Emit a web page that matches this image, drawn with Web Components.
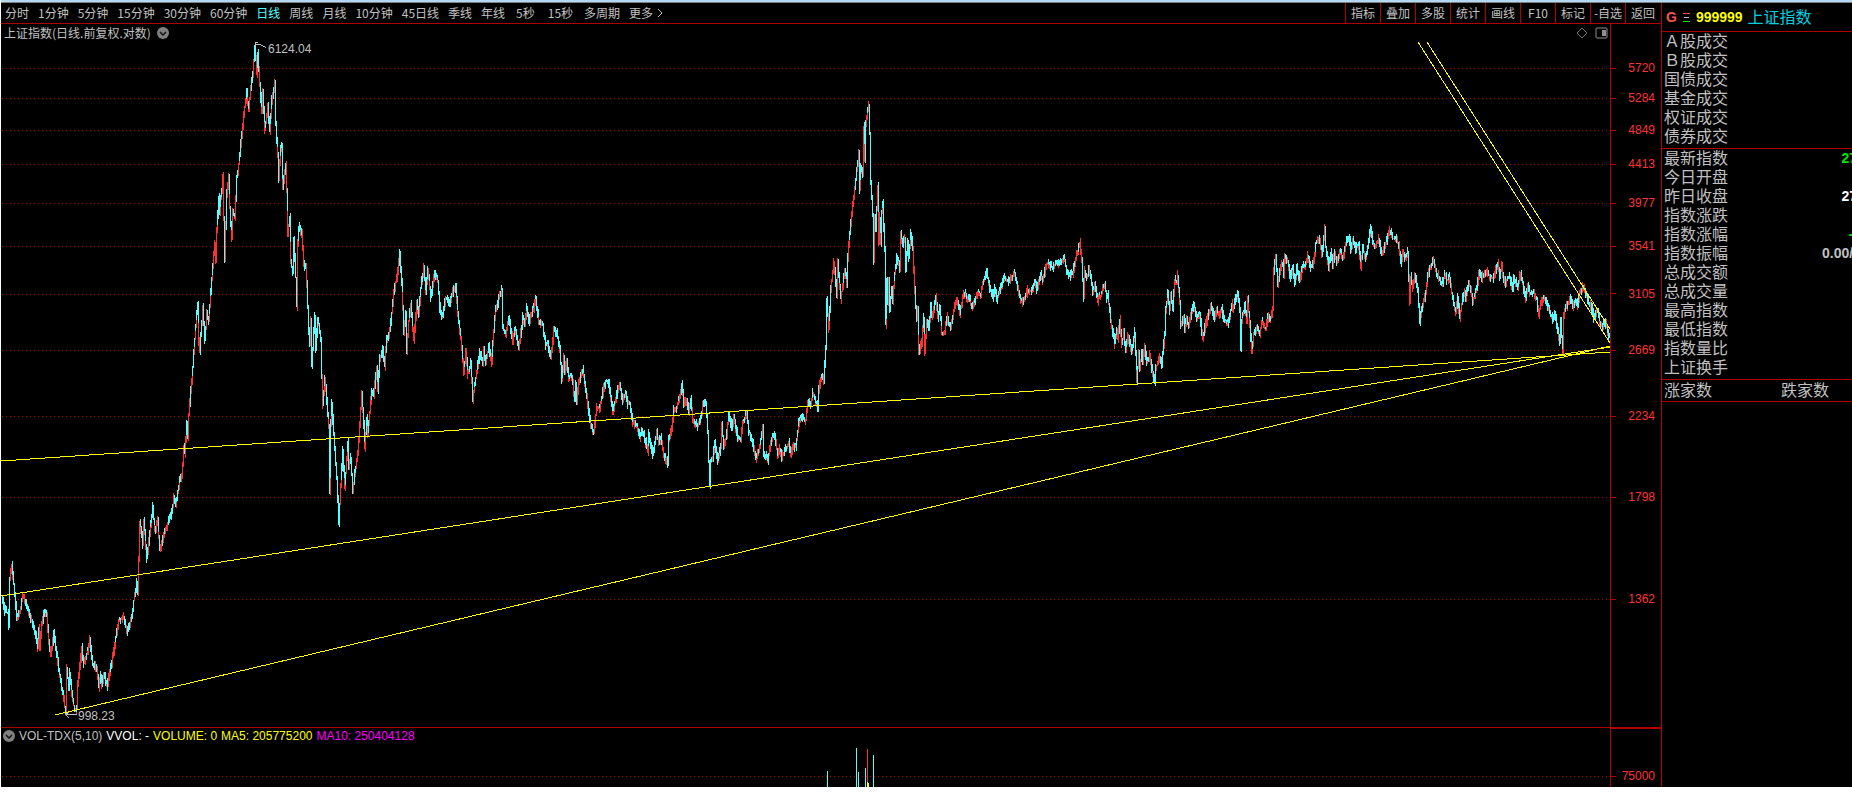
<!DOCTYPE html>
<html lang="zh-CN">
<head>
<meta charset="utf-8">
<meta name="viewport" content="width=device-width, initial-scale=1">
<title>上证指数</title>
<style>
    :root {
        --line: #b00000;
        --text: #c0c0c0;
        --up: #ff3232;
        --down: #54ffff;
        --draw: #ffff00;
    }

    body {
        margin: 0;
        background: #fff;
        color: var(--text);
        font-family: "Liberation Sans", "Noto Sans CJK SC", sans-serif;
        font-size: 12px;
    }
</style>
</head>
<body>
<stock-terminal>
    <period-bar slot="periods"></period-bar>
    <tool-bar slot="tools"></tool-bar>
    <price-chart slot="chart">上证指数(日线.前复权.对数)</price-chart>
    <volume-chart slot="volume"></volume-chart>
    <quote-panel slot="quote" code="999999" name="上证指数"></quote-panel>
</stock-terminal>

<script>
// Daily path of the index, x,y on a 1609 x 703 sheet that starts at 1,24
const TRACE = `
2,598 5,610 8,613 9,625 10,580 12,565 15,593 17,617 20,613 23,595 28,607 32,622 35,630 38,647 39,628 40,647 42,623
45,610 47,615 49,643 51,655 54,632 57,653 60,677 63,693 66,713 67,667 69,688 70,673 73,700 75,710 77,708 78,683 80,667
82,648 84,663 88,650 90,640 93,665 97,667 99,687 101,675 102,685 104,672 107,685 112,663 116,637 119,620 124,617
127,632 132,617 134,600 137,583 138,590 139,557 140,523 143,543 144,520 147,557 150,533 153,507 155,530 158,520
160,550 163,537 167,525 172,512 174,497 176,503 180,480 182,477 184,447 185,452 187,423 188,438 189,413 191,390
192,380 194,352 197,312 198,305 199,340 200,350 203,307 205,340 207,313 209,320 212,277 215,243 216,260 217,230
219,197 220,210 223,177 225,257 227,193 229,175 230,207 232,237 233,210 235,217 237,177 239,163 242,133 245,107
247,92 249,110 251,87 253,73 255,45 257,73 258,53 261,97 262,110 263,90 265,130 268,107 270,130 272,100 275,82
276,123 278,153 279,180 281,147 282,143 283,187 286,163 287,190 288,233 290,217 291,260 293,273 294,237 296,277
297,305 298,243 299,227 302,233 304,263 306,268 307,283 309,330 310,343 311,320 312,363 315,317 316,347 318,318
321,340 322,377 323,403 325,377 327,400 329,427 330,490 331,423 332,403 335,450 337,477 339,522 340,503 343,450
345,487 348,443 349,467 351,457 353,492 355,473 358,453 360,423 362,392 364,423 365,447 367,417 368,433 372,390
374,393 377,367 378,390 380,357 383,350 385,365 387,337 389,337 392,313 394,292 397,277 400,253 402,283 403,307
404,333 406,313 407,350 409,320 411,303 414,340 417,303 419,313 421,287 424,267 426,290 428,270 431,297 435,273
438,280 440,307 442,317 446,297 450,303 454,288 456,287 458,313 461,337 464,373 466,350 468,373 471,362 473,398
476,377 480,352 483,362 484,350 486,362 489,347 492,362 493,343 496,307 498,302 502,288 503,327 506,333 509,318
513,340 515,327 519,348 523,317 525,323 527,308 529,322 533,310 536,300 539,320 543,325 546,345 548,343 551,357
554,330 557,332 560,348 562,378 564,357 565,370 567,360 569,377 572,375 575,400 576,383 577,402 579,380 583,370
586,388 588,405 591,425 594,432 597,407 600,407 604,387 606,380 609,383 613,412 617,393 620,383 623,400 626,392
628,403 630,403 633,422 637,425 640,437 642,428 646,442 648,450 649,432 653,455 657,433 659,443 661,437 664,455
668,463 669,440 672,427 674,410 677,407 679,400 682,385 684,403 687,400 689,412 691,400 693,420 698,425 701,417
703,405 706,402 708,430 709,460 710,485 711,460 713,457 715,442 718,460 721,447 722,423 724,447 727,433 729,412
732,427 734,417 738,437 741,440 743,423 747,413 749,430 752,440 756,457 759,450 763,427 764,452 768,460 770,447
774,433 778,453 780,448 782,457 785,450 789,443 791,453 793,447 796,447 799,422 803,417 806,420 808,400 811,405
813,393 818,407 819,390 822,375 824,380 826,347 827,300 829,327 831,290 834,262 837,293 838,262 841,298 845,270
847,282 848,257 850,233 852,215 855,187 857,170 859,153 860,188 861,165 863,173 864,127 865,160 866,123 868,110
869,106 870,133 871,183 873,213 874,260 875,215 876,227 878,187 879,243 880,217 881,243 882,210 883,202 885,250
886,323 887,280 888,303 889,280 890,307 892,287 893,302 895,273 897,257 900,268 901,233 903,243 905,237 906,267
908,243 909,257 911,232 913,250 915,290 917,320 918,310 919,352 922,343 924,317 925,352 927,320 929,330 931,307
933,317 936,297 938,317 940,308 942,332 945,332 947,317 951,328 954,310 957,300 960,313 964,292 967,298 969,295
971,305 973,308 977,293 981,293 983,283 987,273 990,287 993,297 995,287 997,298 1001,287 1004,277 1008,280
1015,273 1018,288 1022,302 1024,300 1028,290 1032,290 1035,282 1037,288 1041,273 1043,280 1047,263 1053,267
1056,262 1060,263 1064,257 1067,270 1070,275 1073,273 1076,258 1080,243 1082,260 1084,297 1085,270 1087,278
1089,270 1091,275 1093,293 1095,283 1098,300 1101,295 1105,283 1107,298 1108,295 1111,320 1115,343 1117,328
1118,338 1120,320 1122,343 1124,333 1126,350 1128,335 1132,352 1135,332 1136,353 1137,380 1139,353 1140,370
1142,350 1143,360 1145,347 1147,363 1150,355 1153,373 1155,382 1156,367 1160,358 1162,363 1164,343 1165,333
1166,310 1168,293 1170,310 1171,295 1173,307 1175,280 1177,282 1178,275 1180,300 1181,325 1184,318 1185,327
1187,317 1189,327 1192,310 1194,303 1197,318 1200,313 1201,323 1203,338 1206,322 1208,318 1211,305 1215,318
1217,307 1219,315 1222,308 1224,320 1228,323 1230,317 1232,303 1233,310 1236,297 1238,293 1240,310 1241,347
1242,320 1245,305 1247,320 1248,300 1250,323 1252,352 1254,333 1257,327 1260,335 1262,320 1266,330 1268,315
1270,320 1273,310 1274,270 1276,257 1278,283 1280,270 1283,262 1284,273 1285,257 1288,260 1290,278 1293,268
1295,282 1297,267 1300,280 1303,265 1305,267 1308,255 1311,267 1314,262 1316,243 1318,238 1320,240 1322,253
1323,247 1325,227 1326,247 1329,267 1331,253 1333,263 1335,252 1337,262 1340,252 1343,258 1345,248 1347,238
1350,240 1351,248 1353,240 1356,248 1359,243 1361,267 1363,248 1366,258 1369,240 1371,228 1373,243 1375,247
1379,238 1382,253 1386,243 1390,230 1393,238 1396,238 1399,245 1401,262 1403,252 1405,258 1408,252 1409,277
1410,300 1411,277 1413,287 1415,275 1418,290 1420,320 1422,307 1425,298 1428,277 1430,268 1434,260 1437,273
1439,277 1442,285 1445,273 1447,280 1450,277 1452,293 1456,312 1458,298 1460,318 1462,303 1464,292 1466,297
1469,282 1471,290 1473,300 1477,287 1479,273 1482,278 1485,273 1488,270 1490,278 1493,278 1496,270 1498,263
1500,277 1502,262 1503,275 1506,283 1508,277 1510,277 1513,288 1514,278 1518,285 1521,272 1523,283 1526,298
1528,285 1530,292 1534,293 1537,298 1539,315 1541,302 1545,298 1548,305 1550,312 1553,320 1555,312 1557,325
1560,342 1561,318 1563,353 1564,313 1567,305 1571,298 1573,307 1576,300 1578,305 1580,292 1583,287 1586,293
1589,303 1592,307 1594,317 1598,308 1600,322 1602,325 1605,322 1607,325 1609,337`;

const LEVELS = [5720, 5284, 4849, 4413, 3977, 3541, 3105, 2669, 2234, 1798, 1362];
const TOP = 24;
const HEIGHT = 703;

// log scale of the price pane
const levelY = (price) => Math.round(68.4 + Math.log(5720 / price) * 370);
const percent = (y) => ((y - TOP) / HEIGHT * 100) + "%";

const foldIcon = `
    <svg class="fold" width="12" height="12" viewBox="0 0 12 12" aria-hidden="true">
        <circle cx="6" cy="6" r="6" fill="#808080"/>
        <path d="M3 5l3 3 3-3" fill="none" stroke="#111" stroke-width="1.5"/>
    </svg>`;

// Splits every pixel column into a falling part and a rising part
function buildBars() {
    const knots = TRACE.trim().split(/\s+/).map((pair) => pair.split(",").map(Number));
    const paths = { up: "", down: "" };
    let seed = 7;
    const random = () => {
        seed = (seed * 1103515245 + 12345) % 2147483648;
        return seed / 2147483648;
    };

    const at = (x) => {
        let i = 1;
        while (i < knots.length - 1 && knots[i][0] < x) i++;
        const [x0, y0] = knots[i - 1];
        const [x1, y1] = knots[i];
        return y0 + (y1 - y0) * Math.min(1, (x - x0) / (x1 - x0));
    };

    for (let x = 2; x < 1610; x++) {
        const a = at(x);
        const b = at(x + 1);
        const top = Math.round(Math.min(a, b) - random() * 5);
        const bottom = Math.round(Math.max(a, b) + 1 + random() * 5);
        const fall = b > a ? 0.62 : 0.34;
        const pick = random();
        const col = x + 0.5;

        if (pick < fall) {
            paths.down += `M${col} ${top}V${bottom}`;
        } else if (pick > fall + 0.22) {
            paths.up += `M${col} ${top}V${bottom}`;
        } else {
            const mid = Math.round(top + (bottom - top) * (0.4 + random() * 0.4));
            paths.down += `M${col} ${top}V${mid}`;
            paths.up += `M${col} ${mid}V${bottom}`;
        }
    }
    return paths;
}

class StockTerminal extends HTMLElement {
    constructor() {
        super();
        this.attachShadow({ mode: "open" });
        this.shadowRoot.innerHTML = `
            <style>
                :host {
                    display: grid;
                    grid-template-columns: minmax(0, 1fr) 191px;
                    height: calc(100vh - 12px);
                    margin-left: 1px;
                    background: #000;
                    border-top: 1px solid #808080;
                    box-shadow: 0 -2px #b4d8f4;
                    margin-top: 2px;
                    overflow: hidden;
                }

                main {
                    display: flex;
                    flex-direction: column;
                    min-width: 0;
                }

                header {
                    display: flex;
                    justify-content: space-between;
                    height: 20px;
                    border-bottom: 1px solid var(--line);
                }

                slot[name="chart"]::slotted(*) {
                    flex: 1;
                    min-height: 0;
                }
            </style>
            <main>
                <header>
                    <slot name="periods"></slot>
                    <slot name="tools"></slot>
                </header>
                <slot name="chart"></slot>
                <slot name="volume"></slot>
            </main>
            <slot name="quote"></slot>
        `;
    }
}

class PeriodBar extends HTMLElement {
    constructor() {
        super();
        this.attachShadow({ mode: "open" });
        const periods = ["分时", "1分钟", "5分钟", "15分钟", "30分钟", "60分钟", "日线", "周线", "月线",
            "10分钟", "45日线", "季线", "年线", "5秒", "15秒", "多周期", "更多"];

        this.shadowRoot.innerHTML = `
            <style>
                :host {
                    display: flex;
                    align-items: center;
                    gap: 9px;
                    padding-left: 4px;
                    min-width: 0;
                    overflow: hidden;
                }

                button {
                    display: flex;
                    align-items: center;
                    gap: 4px;
                    flex: none;
                    padding: 0;
                    border: 0;
                    background: none;
                    color: inherit;
                    font: 12px/20px "Noto Sans CJK SC", sans-serif;
                    cursor: pointer;
                }

                button.seconds {
                    padding: 0 2px;
                }

                button[aria-pressed="true"] {
                    color: var(--down);
                }
            </style>
            ${periods.map((name) => `
                <button type="button" aria-pressed="${name === "日线"}"
                    ${name.endsWith("秒") ? 'class="seconds"' : ""}>${name}${name === "更多" ? `
                    <svg width="6" height="10" viewBox="0 0 6 10" fill="none" stroke="currentColor" aria-hidden="true">
                        <path d="M1 1l4 4-4 4"/>
                    </svg>` : ""}</button>`).join("")}
        `;
    }
}

class ToolBar extends HTMLElement {
    constructor() {
        super();
        this.attachShadow({ mode: "open" });
        const tools = ["指标", "叠加", "多股", "统计", "画线", "F10", "标记", "-自选", "返回"];

        this.shadowRoot.innerHTML = `
            <style>
                :host {
                    display: flex;
                    flex: none;
                    padding-right: 1px;
                }

                button {
                    width: 35px;
                    padding: 0;
                    border: 0;
                    border-left: 1px solid var(--line);
                    background: none;
                    color: inherit;
                    font: 12px/20px "Noto Sans CJK SC", sans-serif;
                    white-space: nowrap;
                    cursor: pointer;
                }
            </style>
            ${tools.map((name) => `<button type="button">${name}</button>`).join("")}
        `;
    }
}

class PriceChart extends HTMLElement {
    constructor() {
        super();
        this.attachShadow({ mode: "open" });
        const bars = buildBars();

        this.shadowRoot.innerHTML = `
            <style>
                :host {
                    display: grid;
                    grid-template-columns: minmax(0, 1fr) 51px;
                }

                .plot {
                    position: relative;
                    display: grid;
                    min-height: 0;
                }

                .sheet, .caption {
                    grid-area: 1 / 1;
                }

                .sheet {
                    width: 100%;
                    height: 100%;
                    min-height: 0;
                    shape-rendering: crispEdges;
                }

                .sheet path, .sheet line {
                    fill: none;
                    vector-effect: non-scaling-stroke;
                }

                .grid {
                    stroke: #b00000;
                    stroke-dasharray: 1 3;
                }

                .caption {
                    display: flex;
                    align-items: center;
                    gap: 6px;
                    height: 17px;
                    padding: 0 1px 0 3px;
                    font-family: "Noto Sans CJK SC", sans-serif;
                    z-index: 1;
                }

                .marks {
                    display: flex;
                    align-items: center;
                    gap: 7px;
                    margin-left: auto;
                }

                .note {
                    position: absolute;
                    transform: translateY(-50%);
                    line-height: 14px;
                }

                .axis {
                    position: relative;
                    border-left: 1px solid var(--line);
                    color: var(--up);
                }

                .level {
                    position: absolute;
                    left: 0;
                    right: 6px;
                    display: flex;
                    align-items: center;
                    justify-content: space-between;
                    line-height: 14px;
                    transform: translateY(-50%);
                }

                .level::before {
                    content: "";
                    width: 5px;
                    border-top: 1px solid var(--line);
                }
            </style>
            <div class="plot">
                <svg class="sheet" viewBox="1 ${TOP} 1609 ${HEIGHT}" preserveAspectRatio="none" role="img" aria-label="日线">
                    ${LEVELS.map((p) => `<line class="grid" x1="2" x2="1610" y1="${levelY(p) + 0.5}" y2="${levelY(p) + 0.5}"/>`).join("")}
                    <path stroke="#ff3232" d="${bars.up}"/>
                    <path stroke="#54ffff" d="${bars.down}"/>
                    <g stroke="#ffff00">
                        <line x1="1" y1="461" x2="1610" y2="352"/>
                        <line x1="1" y1="596" x2="1610" y2="347"/>
                        <line x1="55" y1="715" x2="1610" y2="346"/>
                        <line x1="1418" y1="42" x2="1610" y2="343"/>
                        <line x1="1427" y1="42" x2="1610" y2="329"/>
                    </g>
                    <path stroke="#c0c0c0" d="M255.500 47V42.500H258M256 44.500H260L266 47.500M77 714.500H66L69 718M66 714.500L69 712"/>
                </svg>
                <div class="caption">
                    <slot></slot>
                    ${foldIcon}
                    <span class="marks">
                        <svg width="12" height="12" viewBox="0 0 12 12" fill="none" stroke="#707070" aria-hidden="true">
                            <path d="M6 1l5 5-5 5-5-5z"/>
                        </svg>
                        <svg width="14" height="12" viewBox="0 0 14 12" aria-hidden="true">
                            <rect x="1" y="1" width="11" height="10" rx="1" fill="none" stroke="#909090"/>
                            <path d="M7 3h4v6H7z" fill="#909090"/>
                        </svg>
                    </span>
                </div>
                <span class="note" style="left: ${267 / 1609 * 100}%; top: ${percent(49)}">6124.04</span>
                <span class="note" style="left: ${77 / 1609 * 100}%; top: ${percent(716)}">998.23</span>
            </div>
            <div class="axis">
                ${LEVELS.map((p) => `<span class="level" style="top: ${percent(levelY(p))}">${p}</span>`).join("")}
            </div>
        `;
    }
}

class VolumeChart extends HTMLElement {
    constructor() {
        super();
        this.attachShadow({ mode: "open" });
        this.shadowRoot.innerHTML = `
            <style>
                :host {
                    display: grid;
                    grid-template-columns: minmax(0, 1fr) 51px;
                    height: 59px;
                    border-top: 1px solid var(--line);
                }

                .plot {
                    display: grid;
                    min-height: 0;
                }

                .sheet, .caption {
                    grid-area: 1 / 1;
                }

                .sheet {
                    width: 100%;
                    height: 59px;
                    shape-rendering: crispEdges;
                }

                .sheet path {
                    fill: none;
                    vector-effect: non-scaling-stroke;
                }

                .caption {
                    display: flex;
                    align-items: center;
                    gap: 4px;
                    height: 16px;
                    padding-left: 2px;
                    white-space: nowrap;
                }

                .axis {
                    display: flex;
                    align-items: flex-end;
                    justify-content: space-between;
                    padding: 0 6px 4px 0;
                    border-left: 1px solid var(--line);
                    border-top: 1px solid var(--line);
                    color: var(--up);
                    line-height: 14px;
                }

                .axis::before {
                    content: "";
                    width: 5px;
                    margin-bottom: 6px;
                    border-top: 1px solid var(--line);
                }
            </style>
            <div class="plot">
                <svg class="sheet" viewBox="1 728 1609 59" preserveAspectRatio="none" role="img" aria-label="VOLUME">
                    <path stroke="#b00000" stroke-dasharray="1 3" d="M2 776.500H1610"/>
                    <path stroke="#54ffff" d="M827.500 771V787M856.500 748V787M858.500 772V787M865.500 768V787M873.500 755V787"/>
                    <path stroke="#ff3232" d="M867.500 749V787"/>
                    <path stroke="#ffff00" d="M867.500 782V787M868.500 783V787"/>
                </svg>
                <div class="caption">
                    ${foldIcon}
                    <span>VOL-TDX(5,10)</span>
                    <span style="color: #fff">VVOL: -</span>
                    <span style="color: var(--draw)">VOLUME: 0</span>
                    <span style="color: var(--draw)">MA5: 205775200</span>
                    <span style="color: #ff00ff">MA10: 250404128</span>
                </div>
            </div>
            <div class="axis">75000</div>
        `;
    }
}

class QuotePanel extends HTMLElement {
    constructor() {
        super();
        this.attachShadow({ mode: "open" });
    }

    connectedCallback() {
        const turnover = ["Ａ股成交", "Ｂ股成交", "国债成交", "基金成交", "权证成交", "债券成交"];
        const figures = [
            ["最新指数", "27", "#00e600"],
            ["今日开盘"],
            ["昨日收盘", "27", "#fff"],
            ["指数涨跌"],
            ["指数涨幅", "-\u00a0", "#00e600"],
            ["指数振幅", "0.00/\u00a0", "#c0c0c0"],
            ["总成交额"],
            ["总成交量"],
            ["最高指数"],
            ["最低指数"],
            ["指数量比"],
            ["上证换手"]
        ];
        const row = ([name, value = "", color = "inherit"]) =>
            `<tr><th scope="row">${name}</th><td style="color: ${color}">${value}</td></tr>`;

        this.shadowRoot.innerHTML = `
            <style>
                :host {
                    display: block;
                    border-left: 1px solid var(--line);
                    overflow: hidden;
                    font: 16px/19px "Liberation Sans", "Noto Sans CJK SC", sans-serif;
                }

                h1 {
                    display: flex;
                    align-items: center;
                    gap: 5px;
                    height: 28px;
                    margin: 0;
                    padding-left: 4px;
                    border-bottom: 1px solid var(--line);
                    font-size: 16px;
                    font-weight: 400;
                    color: #00d0e0;
                    white-space: nowrap;
                }

                h1 b {
                    font: bold 14px "Liberation Sans", sans-serif;
                    color: #ffff00;
                }

                h1 b.flag {
                    color: #ff5050;
                }

                section {
                    padding-bottom: 2px;
                    border-bottom: 1px solid var(--line);
                }

                table {
                    width: calc(100% + 5px);
                    border-collapse: collapse;
                }

                th, td {
                    height: 19px;
                    padding: 0;
                    line-height: 19px;
                    white-space: nowrap;
                }

                th {
                    padding-left: 2px;
                    font-weight: 400;
                    text-align: left;
                }

                td {
                    font-size: 14px;
                    font-weight: 700;
                    text-align: right;
                }

                .breadth {
                    display: grid;
                    grid-template-columns: 117px 1fr;
                    padding: 1px 0 1px 2px;
                    border-bottom: 1px solid var(--line);
                }
            </style>
            <h1>
                <b class="flag">G</b>
                <svg width="9" height="11" viewBox="0 0 9 11" shape-rendering="crispEdges" aria-hidden="true">
                    <path d="M1 1.500h7" stroke="#ff5050"/>
                    <path d="M2 5.500h5" stroke="#c0c0c0"/>
                    <path d="M1 9.500h7" stroke="#00e600"/>
                </svg>
                <b>${this.getAttribute("code")}</b>
                <span>${this.getAttribute("name")}</span>
            </h1>
            <section>
                <table><tbody>${turnover.map((name) => row([name])).join("")}</tbody></table>
            </section>
            <section>
                <table><tbody>${figures.map(row).join("")}</tbody></table>
            </section>
            <div class="breadth"><span>涨家数</span><span>跌家数</span></div>
        `;
    }
}

customElements.define("stock-terminal", StockTerminal);
customElements.define("period-bar", PeriodBar);
customElements.define("tool-bar", ToolBar);
customElements.define("price-chart", PriceChart);
customElements.define("volume-chart", VolumeChart);
customElements.define("quote-panel", QuotePanel);
</script>
</body>
</html>
